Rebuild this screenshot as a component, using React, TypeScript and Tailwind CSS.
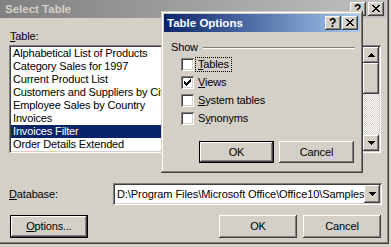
import React from "react";

const RAISED =
  "shadow-[inset_-1px_-1px_#404040,inset_1px_1px_#ffffff,inset_-2px_-2px_#808080,inset_2px_2px_#d4d0c8]";
const SUNKEN =
  "shadow-[inset_1px_1px_#808080,inset_-1px_-1px_#ffffff,inset_2px_2px_#404040,inset_-2px_-2px_#d4d0c8]";
const DEFAULT_BTN =
  "shadow-[inset_0_0_0_1px_#000000,inset_-2px_-2px_#404040,inset_2px_2px_#ffffff,inset_-3px_-3px_#808080]";
const WINDOW =
  "shadow-[inset_-1px_-1px_#404040,inset_1px_1px_#d4d0c8,inset_-2px_-2px_#808080,inset_2px_2px_#ffffff]";

function Pixels({ w, h, px }: { w: number; h: number; px: number[][] }) {
  return (
    <svg width={w} height={h} shapeRendering="crispEdges" className="block">
      {px.map(([x, y], i) => (
        <rect key={i} x={x} y={y} width="1" height="1" fill="#000" />
      ))}
    </svg>
  );
}

const X_PX = [
  [0, 0], [1, 0], [6, 0], [7, 0],
  [1, 1], [2, 1], [5, 1], [6, 1],
  [2, 2], [3, 2], [4, 2], [5, 2],
  [3, 3], [4, 3],
  [2, 4], [3, 4], [4, 4], [5, 4],
  [1, 5], [2, 5], [5, 5], [6, 5],
  [0, 6], [1, 6], [6, 6], [7, 6],
];

const UP_PX = [
  [3, 0],
  [2, 1], [3, 1], [4, 1],
  [1, 2], [2, 2], [3, 2], [4, 2], [5, 2],
  [0, 3], [1, 3], [2, 3], [3, 3], [4, 3], [5, 3], [6, 3],
];
const DOWN_PX = UP_PX.map(([x, y]) => [x, 3 - y]);

const CHECK_PX = [
  [6, 0],
  [5, 1], [6, 1],
  [0, 2], [4, 2], [5, 2], [6, 2],
  [0, 3], [1, 3], [3, 3], [4, 3], [5, 3],
  [0, 4], [1, 4], [2, 4], [3, 4], [4, 4],
  [1, 5], [2, 5], [3, 5],
  [2, 6],
];

function TitleBtn({ kind }: { kind: "help" | "close" }) {
  return (
    <div
      className={`w-[16px] h-[14px] bg-[#d4d0c8] ${RAISED} flex items-center justify-center`}
    >
      {kind === "close" ? (
        <div className="-mt-[1px] -ml-[1px]">
          <Pixels w={8} h={7} px={X_PX} />
        </div>
      ) : (
        <span className="text-[12px] leading-[12px] font-bold text-black -mt-[1px] -ml-[1px]">?</span>
      )}
    </div>
  );
}

function Btn({
  children,
  w,
  h,
  def,
}: {
  children: React.ReactNode;
  w: string;
  h: string;
  def?: boolean;
}) {
  return (
    <div
      className={`${w} ${h} bg-[#d4d0c8] ${def ? DEFAULT_BTN : RAISED} flex items-center justify-center text-black`}
    >
      {children}
    </div>
  );
}

function U({ children }: { children: React.ReactNode }) {
  return <span className="underline underline-offset-[1px] decoration-1">{children}</span>;
}

function Check({ checked, label, focus }: { checked?: boolean; label: React.ReactNode; focus?: boolean }) {
  return (
    <div className="flex items-start h-[18px]">
      <div className={`w-[13px] h-[13px] bg-white ${SUNKEN} flex items-center justify-center`}>
        {checked && <Pixels w={7} h={7} px={CHECK_PX} />}
      </div>
      <span
        className={`ml-[1px] -mt-[1px] px-[2px] leading-[13px] border border-dotted ${focus ? "border-black" : "border-transparent"}`}
      >
        {label}
      </span>
    </div>
  );
}

const ITEMS = [
  "Alphabetical List of Products",
  "Category Sales for 1997",
  "Current Product List",
  "Customers and Suppliers by City",
  "Employee Sales by Country",
  "Invoices",
  "Invoices Filter",
  "Order Details Extended",
];

export default function App() {
  return (
    <div className="w-[391px] h-[247px] bg-[#d4d0c8] overflow-hidden font-['Liberation_Sans',Arial,sans-serif] text-[11px] leading-[13px] tracking-[-0.15px] text-black">
      <div className={`relative w-[389px] h-[244px] bg-[#d4d0c8] pr-[3px] pb-[3px] shadow-[inset_-1px_-1px_#404040,inset_-2px_-2px_#808080]`}>
        {/* Outer title bar (inactive) */}
        <div className="h-[18px] bg-[linear-gradient(to_right,#808080,#c0c0c0)] flex items-center pl-[5px] pr-[2px]">
          <span className="font-bold text-[11.5px] tracking-normal text-[#d4d0c8] flex-1">Select Table</span>
          <div className="flex gap-[2px]">
            <TitleBtn kind="help" />
            <TitleBtn kind="close" />
          </div>
        </div>

        {/* Outer content */}
        <div className="pl-[9px]">
          <div className="mt-[12px] ml-[1px] h-[13px]">
            <U>T</U>able:
          </div>
          <div className={`mt-[2px] w-[372px] h-[108px] bg-white ${SUNKEN} p-[2px] flex`}>
            <div className="flex-1 flex flex-col overflow-hidden">
              {ITEMS.map((it, i) => (
                <div
                  key={it}
                  className={`h-[13px] pl-[2px] whitespace-nowrap ${i === 6 ? "bg-[#0a246a] text-white" : ""}`}
                >
                  {it}
                </div>
              ))}
            </div>
            <div className="w-[16px] flex flex-col">
              <div className={`h-[16px] bg-[#d4d0c8] ${RAISED} flex items-center justify-center`}>
                <div className="-mt-[1px]">
                  <Pixels w={7} h={4} px={UP_PX} />
                </div>
              </div>
              <div className="flex-1 flex flex-col bg-[repeating-conic-gradient(#d4d0c8_0%_25%,#ffffff_0%_50%)] bg-[length:2px_2px]">
                <div className={`h-[31px] bg-[#d4d0c8] ${RAISED}`} />
              </div>
              <div className={`h-[16px] bg-[#d4d0c8] ${RAISED} flex items-center justify-center`}>
                <Pixels w={7} h={4} px={DOWN_PX} />
              </div>
            </div>
          </div>

          <div className="mt-[30px] h-[22px] flex items-center">
            <span className="w-[104px]">
              <U>D</U>atabase:
            </span>
            <div className={`w-[269px] h-[22px] bg-white ${SUNKEN} p-[2px] flex items-center`}>
              <span className="flex-1 overflow-hidden whitespace-nowrap pl-[2px] tracking-[-0.08px]">
                D:\Program Files\Microsoft Office\Office10\Samples
              </span>
              <div className={`w-[16px] h-[18px] bg-[#d4d0c8] ${RAISED} flex items-center justify-center`}>
                <Pixels w={7} h={4} px={DOWN_PX} />
              </div>
            </div>
          </div>

          <div className="mt-[10px] flex items-center w-[373px]">
            <div className="ml-[1px]">
              <Btn w="w-[78px]" h="h-[23px]" def>
                <span>
                  <U>O</U>ptions...
                </span>
              </Btn>
            </div>
            <div className="ml-auto mr-[1px] flex gap-[6px]">
              <Btn w="w-[78px]" h="h-[23px]">OK</Btn>
              <Btn w="w-[78px]" h="h-[23px]">Cancel</Btn>
            </div>
          </div>
        </div>

        {/* Table Options dialog (floating window) */}
        <div className={`absolute left-[161px] top-[11px] w-[202px] h-[162px] bg-[#d4d0c8] ${WINDOW} p-[3px]`}>
          <div className="h-[18px] bg-[linear-gradient(to_right,#0a246a,#a6caf0)] flex items-center pl-[3px] pr-[2px]">
            <span className="font-bold text-[11.5px] tracking-normal text-white flex-1">Table Options</span>
            <div className="flex gap-[1px]">
              <TitleBtn kind="help" />
              <TitleBtn kind="close" />
            </div>
          </div>

          <div className="mt-[9px] h-[13px] flex items-center pl-[7px] pr-[5px]">
            <span>Show</span>
            <div className="flex-1 ml-[5px] h-[2px] border-t border-[#808080] border-b-white border-b" />
          </div>

          <div className="mt-[4px] pl-[17px] flex flex-col">
            <Check label={<><U>T</U>ables</>} focus />
            <Check label={<><U>V</U>iews</>} checked />
            <Check label={<><U>S</U>ystem tables</>} />
            <Check label={<>S<U>y</U>nonyms</>} />
          </div>

          <div className="mt-[11px] pl-[35px] flex gap-[5px]">
            <Btn w="w-[75px]" h="h-[22px]" def>OK</Btn>
            <Btn w="w-[75px]" h="h-[22px]">Cancel</Btn>
          </div>
        </div>
      </div>
    </div>
  );
}
